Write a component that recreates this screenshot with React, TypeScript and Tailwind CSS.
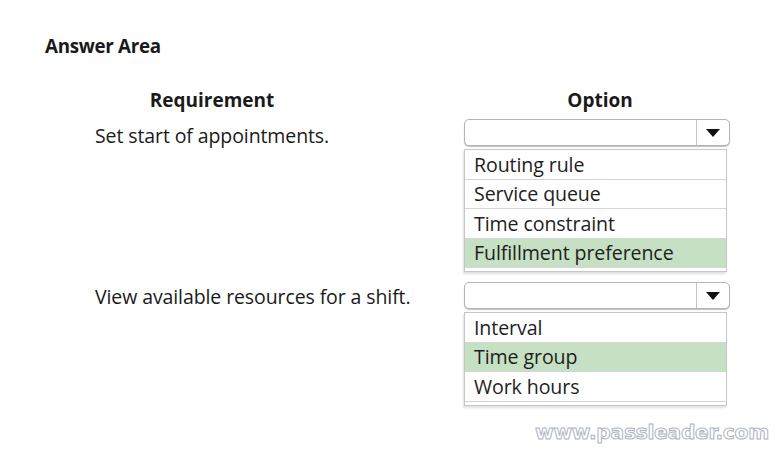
import type { ReactNode } from "react"

type Choice = { label: string; correct?: boolean }

const rows: { requirement: string; choices: Choice[] }[] = [
  {
    requirement: "Set start of appointments.",
    choices: [
      { label: "Routing rule" },
      { label: "Service queue" },
      { label: "Time constraint" },
      { label: "Fulfillment preference", correct: true },
    ],
  },
  {
    requirement: "View available resources for a shift.",
    choices: [
      { label: "Interval" },
      { label: "Time group", correct: true },
      { label: "Work hours" },
    ],
  },
]

function Dropdown() {
  return (
    <div className="flex h-[27px] w-[266px] rounded-[5px] border border-[#b4b4b4] bg-white shadow-[0_1px_1px_rgba(0,0,0,0.25)]">
      <div className="flex-1" />
      <div className="flex w-[33px] items-center justify-center border-l border-[#c4c4c4]">
        <svg width="14" height="8" viewBox="0 0 14 8">
          <polygon points="0,0 14,0 7,8" fill="#111" />
        </svg>
      </div>
    </div>
  )
}

function ChoiceList({ choices }: { choices: Choice[] }) {
  return (
    <div className="mt-[3px] w-[263px] border border-[#c6c6c6] bg-white pb-[3px] shadow-[-1px_2px_2px_rgba(0,0,0,0.12)]">
      {choices.map((c) => (
        <div
          key={c.label}
          className={
            "flex h-[29.5px] items-center whitespace-nowrap border-b border-[#d4d4d4] px-[9px] text-[19.6px] tracking-[-0.1px] text-[#1e1e1e] " +
            (c.correct ? "bg-[#c5e0c3]" : "bg-white")
          }
        >
          {c.label}
        </div>
      ))}
    </div>
  )
}

function Cell({ children, className = "" }: { children: ReactNode; className?: string }) {
  return <div className={className}>{children}</div>
}

export default function App() {
  return (
    <div className="relative h-[451px] w-[782px] overflow-hidden bg-white font-['Open_Sans',sans-serif] text-[#1a1a1a]">
      <div className="pl-[45px] pt-[32px] text-[18.8px] font-bold tracking-[-0.3px]">Answer Area</div>

      <div className="mt-[28px] grid grid-cols-[304px_266px] gap-x-[100px] pl-[60px]">
        <Cell className="text-center text-[19px] font-bold leading-[24px]">Requirement</Cell>
        <Cell className="pl-[6px] text-center text-[19px] font-bold leading-[24px]">Option</Cell>

        {rows.map((r, i) => (
          <div key={r.requirement} className="contents">
            <Cell
              className={
                "whitespace-nowrap pl-[35px] text-[19.5px] tracking-[-0.1px] " +
                (i === 0 ? "mt-[7px] pt-[2px]" : "mt-[10px] pt-[0px]")
              }
            >
              {r.requirement}
            </Cell>
            <Cell className={i === 0 ? "mt-[7px]" : "mt-[10px]"}>
              <Dropdown />
              <ChoiceList choices={r.choices} />
            </Cell>
          </div>
        ))}
      </div>

      <div className="absolute left-[535px] top-[417px] whitespace-nowrap font-['DejaVu_Sans',sans-serif] text-[20.2px] font-bold tracking-[-0.25px] text-transparent [-webkit-text-stroke:1px_#aeb3c4]">
        www.passleader.com
      </div>
    </div>
  )
}
